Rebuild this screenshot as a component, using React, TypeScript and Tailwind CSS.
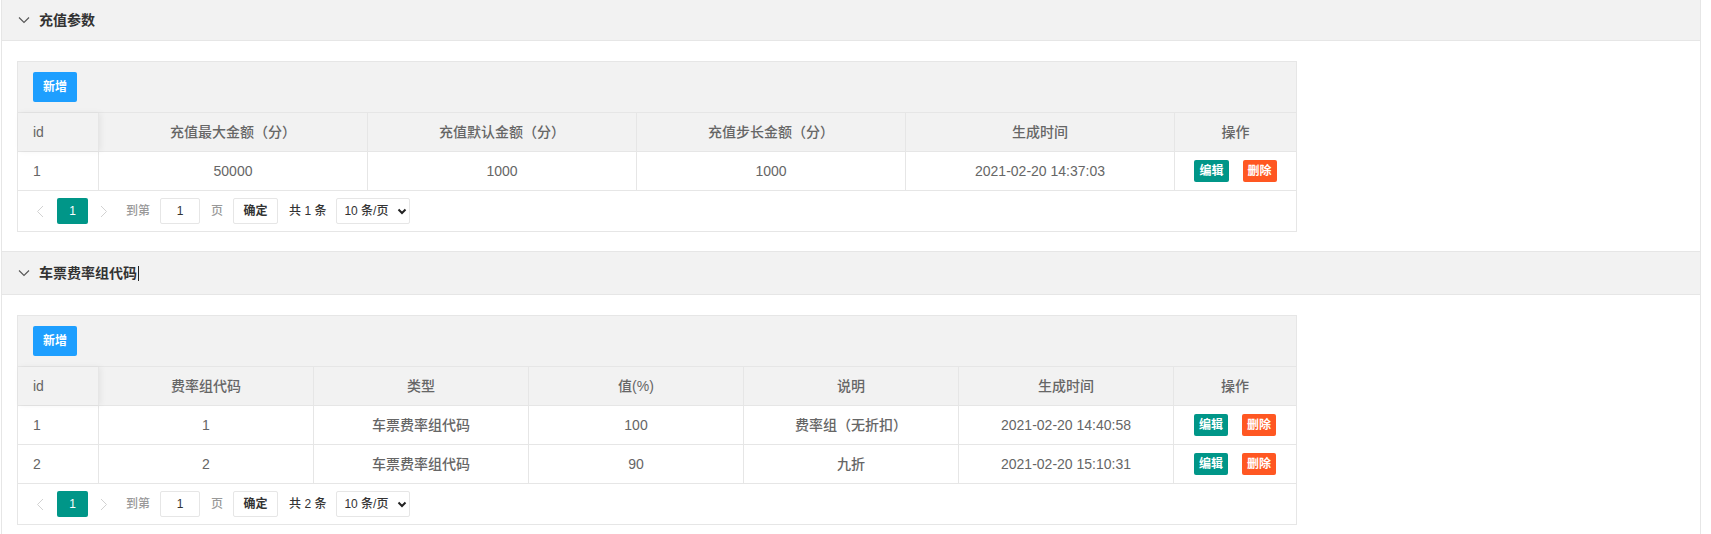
import React from 'react';

interface Column {
  title: string;
  width: string;
  left?: boolean;
}

const font = "font-['Liberation_Sans','Noto_Sans_CJK_SC',sans-serif]";

const Chevron: React.FC = () => (
  <svg width="12" height="8" viewBox="0 0 12 8" className="mr-[9px] text-[#555]">
    <polyline points="1,1.5 6,6.5 11,1.5" fill="none" stroke="currentColor" strokeWidth="1.1" />
  </svg>
);

const Title: React.FC<{ text: string; first?: boolean; cursor?: boolean }> = ({ text, first, cursor }) => (
  <div
    className={`flex items-center bg-[#f2f2f2] pl-[16px] text-[14px] font-bold text-[#333] border-b border-[#e6e6e6] ${
      first ? 'h-[41px]' : 'h-[44px] border-t'
    }`}
  >
    <Chevron />
    <span>{text}</span>
    {cursor && <span className="ml-px inline-block w-px h-[15px] bg-[#222]" />}
  </div>
);

const Pager: React.FC<{ total: number }> = ({ total }) => (
  <div className="flex items-center h-[40px] pl-[7px] text-[12px]">
    <span className="w-[30px] flex justify-center text-[#d2d2d2]">
      <svg width="8" height="13" viewBox="0 0 8 13">
        <polyline points="7,1 1.5,6.5 7,12" fill="none" stroke="currentColor" strokeWidth="1" />
      </svg>
    </span>
    <span className="ml-[2px] h-[26px] w-[31px] rounded-[2px] bg-[#009688] text-white flex items-center justify-center">1</span>
    <span className="w-[32px] flex justify-center text-[#d2d2d2]">
      <svg width="8" height="13" viewBox="0 0 8 13">
        <polyline points="1,1 6.5,6.5 1,12" fill="none" stroke="currentColor" strokeWidth="1" />
      </svg>
    </span>
    <span className="ml-[6px] text-[#999]">到第</span>
    <span className="ml-[10px] h-[26px] w-[40px] border border-[#e6e6e6] rounded-[2px] flex items-center justify-center text-[#333]">
      1
    </span>
    <span className="ml-[11px] text-[#999]">页</span>
    <span className="ml-[10px] h-[26px] w-[45px] border border-[#e6e6e6] rounded-[2px] flex items-center justify-center font-bold text-[#333]">
      确定
    </span>
    <span className="ml-[11px] text-[#333]">共 {total} 条</span>
    <span className="ml-[10px] h-[26px] w-[74px] border border-[#e6e6e6] rounded-[2px] flex items-center pl-[7px] text-[#333]">
      <span>10 条/页</span>
      <svg width="10" height="7" viewBox="0 0 10 7" className="ml-[9px]">
        <polyline points="1.5,1.5 5,5 8.5,1.5" fill="none" stroke="#222" strokeWidth="2" />
      </svg>
    </span>
  </div>
);

const DataTable: React.FC<{ columns: Column[]; rows: string[][] }> = ({ columns, rows }) => (
  <div className="w-[1280px] border border-[#e6e6e6] text-[14px] text-[#666] font-medium">
    <div className="h-[51px] bg-[#f2f2f2] border-b border-[#e6e6e6] flex items-center px-[15px]">
      <button className="h-[30px] px-[10px] rounded-[2px] bg-[#1E9FFF] text-white text-[12px] font-bold">新增</button>
    </div>
    <div className="flex h-[39px] bg-[#f2f2f2] border-b border-[#e6e6e6]">
      {columns.map((c, i) => (
        <div
          key={i}
          className={`${c.width} flex items-center ${c.left ? 'pl-[15px] shadow-[2px_0_6px_rgba(0,0,0,0.06)] relative' : 'justify-center'} ${
            i < columns.length - 1 ? 'border-r border-[#e6e6e6]' : ''
          }`}
        >
          {c.title}
        </div>
      ))}
    </div>
    {rows.map((r, ri) => (
      <div key={ri} className="flex h-[39px] border-b border-[#e6e6e6]">
        {columns.map((c, i) => (
          <div
            key={i}
            className={`${c.width} flex items-center ${c.left ? 'pl-[15px]' : 'justify-center'} ${
              i < columns.length - 1 ? 'border-r border-[#e6e6e6]' : ''
            }`}
          >
            {i === columns.length - 1 ? (
              <div className="flex gap-[14px]">
                <button className="h-[22px] px-[5px] rounded-[2px] bg-[#009688] text-white text-[12px] font-bold">编辑</button>
                <button className="h-[22px] px-[5px] rounded-[2px] bg-[#FF5722] text-white text-[12px] font-bold">删除</button>
              </div>
            ) : (
              r[i]
            )}
          </div>
        ))}
      </div>
    ))}
    <Pager total={rows.length} />
  </div>
);

const rechargeColumns: Column[] = [
  { title: 'id', width: 'w-[81px]', left: true },
  { title: '充值最大金额（分）', width: 'w-[269px]' },
  { title: '充值默认金额（分）', width: 'w-[269px]' },
  { title: '充值步长金额（分）', width: 'w-[269px]' },
  { title: '生成时间', width: 'w-[269px]' },
  { title: '操作', width: 'w-[121px]' },
];

const rateColumns: Column[] = [
  { title: 'id', width: 'w-[81px]', left: true },
  { title: '费率组代码', width: 'w-[215px]' },
  { title: '类型', width: 'w-[215px]' },
  { title: '值(%)', width: 'w-[215px]' },
  { title: '说明', width: 'w-[215px]' },
  { title: '生成时间', width: 'w-[215px]' },
  { title: '操作', width: 'w-[122px]' },
];

const App: React.FC = () => {
  return (
    <div className={`min-h-screen bg-white ${font}`}>
      <div className="ml-px w-[1700px] border-x border-[#e6e6e6]">
        <Title text="充值参数" first />
        <div className="pt-[20px] pb-[19px] pl-[15px]">
          <DataTable columns={rechargeColumns} rows={[['1', '50000', '1000', '1000', '2021-02-20 14:37:03', '']]} />
        </div>
        <Title text="车票费率组代码" cursor />
        <div className="pt-[20px] pb-[20px] pl-[15px]">
          <DataTable
            columns={rateColumns}
            rows={[
              ['1', '1', '车票费率组代码', '100', '费率组（无折扣）', '2021-02-20 14:40:58', ''],
              ['2', '2', '车票费率组代码', '90', '九折', '2021-02-20 15:10:31', ''],
            ]}
          />
        </div>
      </div>
    </div>
  );
};

export default App;
